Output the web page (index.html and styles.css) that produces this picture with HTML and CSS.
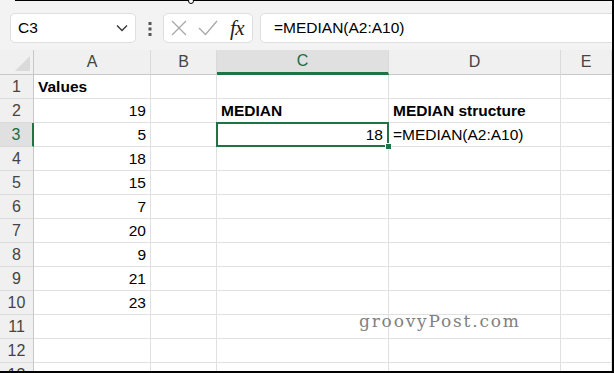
FILE: index.html
```html
<!DOCTYPE html>
<html lang="en">
<head>
  <meta charset="UTF-8">
  <title>MEDIAN - Excel</title>
  <link rel="stylesheet" href="styles.css">
</head>
<body>
<div class="frame">
  <div class="topline"><span class="knob"></span></div>
  <div class="toolbar">
    <div class="namebox">
      <span>C3</span>
      <svg class="chevron" width="12" height="8" viewBox="0 0 12 8"><path d="M1 1.5 L6 6.5 L11 1.5" fill="none" stroke="#333" stroke-width="1.3"/></svg>
    </div>
    <svg class="grip" width="4" height="14" viewBox="0 0 4 14">
      <rect x="0.5" y="0" width="3" height="3" fill="#555"/>
      <rect x="0.5" y="5.5" width="3" height="3" fill="#555"/>
      <rect x="0.5" y="11" width="3" height="3" fill="#555"/>
    </svg>
    <div class="fxbox">
      <svg width="16" height="16" viewBox="0 0 16 16"><path d="M1 1 L15 15 M15 1 L1 15" stroke="#a6a6a6" stroke-width="1.2" fill="none"/></svg>
      <svg width="20" height="16" viewBox="0 0 20 16"><path d="M1 8 L7.5 14.5 L19 1" stroke="#a6a6a6" stroke-width="1.2" fill="none"/></svg>
      <span class="fx">fx</span>
    </div>
    <div class="formula">=MEDIAN(A2:A10)</div>
  </div>

  <div class="sheet">
    <div class="corner"><span class="tri"></span></div>
    <div class="col">A</div>
    <div class="col">B</div>
    <div class="col sel">C</div>
    <div class="col">D</div>
    <div class="col">E</div>

    <div class="row">1</div><div class="cell b">Values</div><div class="cell"></div><div class="cell"></div><div class="cell"></div><div class="cell"></div>
    <div class="row">2</div><div class="cell num">19</div><div class="cell"></div><div class="cell b">MEDIAN</div><div class="cell b">MEDIAN structure</div><div class="cell"></div>
    <div class="row sel">3</div><div class="cell num">5</div><div class="cell"></div><div class="cell num active">18</div><div class="cell">=MEDIAN(A2:A10)</div><div class="cell"></div>
    <div class="row">4</div><div class="cell num">18</div><div class="cell"></div><div class="cell"></div><div class="cell"></div><div class="cell"></div>
    <div class="row">5</div><div class="cell num">15</div><div class="cell"></div><div class="cell"></div><div class="cell"></div><div class="cell"></div>
    <div class="row">6</div><div class="cell num">7</div><div class="cell"></div><div class="cell"></div><div class="cell"></div><div class="cell"></div>
    <div class="row">7</div><div class="cell num">20</div><div class="cell"></div><div class="cell"></div><div class="cell"></div><div class="cell"></div>
    <div class="row">8</div><div class="cell num">9</div><div class="cell"></div><div class="cell"></div><div class="cell"></div><div class="cell"></div>
    <div class="row">9</div><div class="cell num">21</div><div class="cell"></div><div class="cell"></div><div class="cell"></div><div class="cell"></div>
    <div class="row">10</div><div class="cell num">23</div><div class="cell"></div><div class="cell"></div><div class="cell"></div><div class="cell"></div>
    <div class="row">11</div><div class="cell"></div><div class="cell"></div><div class="cell"></div><div class="cell"></div><div class="cell"></div>
    <div class="row">12</div><div class="cell"></div><div class="cell"></div><div class="cell"></div><div class="cell"></div><div class="cell"></div>
    <div class="row">13</div><div class="cell"></div><div class="cell"></div><div class="cell"></div><div class="cell"></div><div class="cell"></div>
  </div>

  <div class="watermark">groovyPost.com</div>
</div>
</body>
</html>
```

FILE: styles.css
```css
body {
  margin: 0;
  background: #fff;
  font-family: 'Liberation Sans', Arial, sans-serif;
}
.frame {
  position: relative;
  width: 614px;
  height: 373px;
  box-sizing: border-box;
  border-right: 2px solid #000;
  border-bottom: 2px solid #000;
  overflow: hidden;
  background: #f3f3f3;
}
.topline {
  position: relative;
  height: 1px;
  margin-left: 15px;
  background: #000;
}
.knob {
  position: absolute;
  left: 173px;
  top: -2px;
  width: 4px;
  height: 4px;
  border: 1px solid #000;
  border-radius: 50%;
  background: #fff;
}

/* Toolbar */
.toolbar {
  display: flex;
  align-items: flex-start;
  height: 49px;
  box-sizing: border-box;
  padding: 12px 0 0 10px;
}
.namebox, .fxbox, .formula {
  height: 30px;
  box-sizing: border-box;
  background: #fff;
  border: 1px solid #dedede;
  border-radius: 5px;
}
.namebox {
  width: 126px;
  display: flex;
  align-items: center;
  justify-content: space-between;
  padding: 0 7px 0 7px;
  font-size: 15.5px;
  color: #000;
}
.grip {
  margin: 9px 11px 0 12px;
}
.fxbox {
  width: 90px;
  display: flex;
  align-items: center;
  gap: 11px;
  padding-left: 7px;
}
.fx {
  font-family: 'Liberation Serif', 'Times New Roman', serif;
  font-style: italic;
  font-size: 21px;
  color: #222;
  margin-left: 1px;
  letter-spacing: -0.5px;
}
.formula {
  flex: 1;
  margin-left: 7px;
  margin-right: -10px;
  padding-left: 13px;
  line-height: 28px;
  font-size: 15.5px;
  color: #000;
}

/* Sheet */
.sheet {
  display: grid;
  grid-template-columns: 34px 117px 66px 172px 172px 1fr;
  grid-template-rows: 25px;
  grid-auto-rows: 24px;
  background: #fff;
}
.corner {
  position: relative;
  background: #f0f0f0;
  border-right: 1px solid #c8c8c8;
  border-bottom: 1px solid #c8c8c8;
}
.tri {
  position: absolute;
  right: 3px;
  bottom: 3px;
  width: 0;
  height: 0;
  border-left: 15px solid transparent;
  border-bottom: 15px solid #dadada;
}
.col {
  background: #f0f0f0;
  border-right: 1px solid #dadada;
  border-bottom: 1px solid #c8c8c8;
  text-align: center;
  font-size: 16px;
  line-height: 24px;
  color: #444;
}
.col.sel {
  background: #e0e0e0;
  color: #1e6b3e;
  border-bottom: 3px solid #217346;
  line-height: 22px;
}
.row {
  background: #f0f0f0;
  border-right: 1px solid #c8c8c8;
  border-bottom: 1px solid #dadada;
  text-align: center;
  font-size: 16px;
  line-height: 23px;
  color: #444;
}
.row.sel {
  background: #e0e0e0;
  color: #1e6b3e;
  border-right: 2px solid #217346;
}
.cell {
  border-right: 1px solid #e0e0e0;
  border-bottom: 1px solid #e0e0e0;
  padding: 0 4px;
  font-size: 15.5px;
  line-height: 23px;
  color: #000;
  white-space: nowrap;
  overflow: visible;
}
.cell.b {
  font-weight: bold;
}
.cell.num {
  text-align: right;
}
.cell.active {
  position: relative;
  padding-right: 5px;
}
.cell.active::before {
  content: '';
  position: absolute;
  left: -1px;
  top: -1px;
  right: -1px;
  bottom: -1px;
  border: 2px solid #217346;
}
.cell.active::after {
  content: '';
  position: absolute;
  right: -4px;
  bottom: -4px;
  width: 5px;
  height: 5px;
  background: #217346;
  border: 1px solid #fff;
}

.watermark {
  position: absolute;
  left: 359px;
  top: 311px;
  font-family: 'DejaVu Serif', 'Liberation Serif', serif;
  font-size: 17px;
  letter-spacing: 1.8px;
  color: #808080;
}
```
